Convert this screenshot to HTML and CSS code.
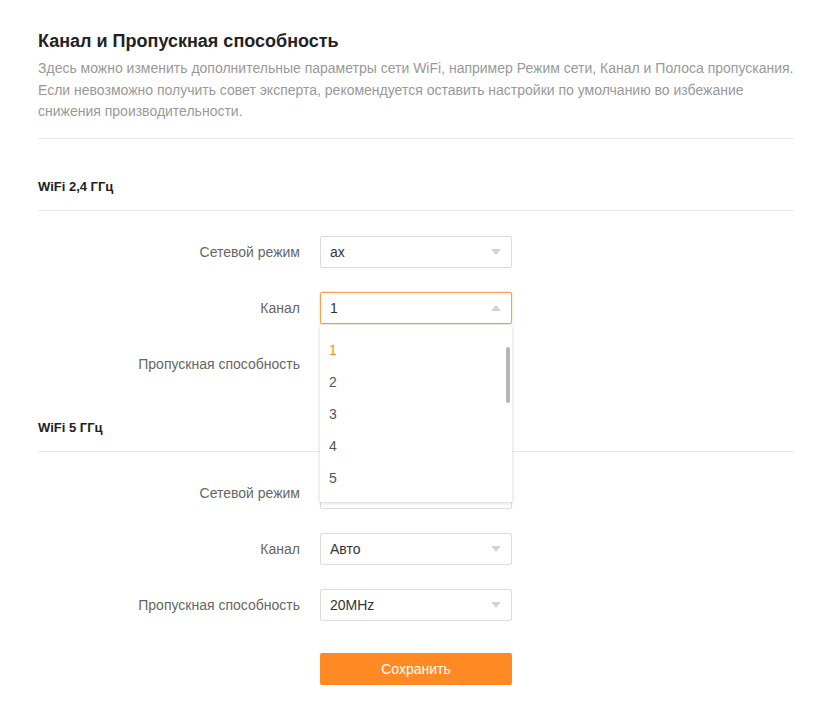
FILE: index.html
```html
<!DOCTYPE html>
<html lang="ru">
<head>
  <meta charset="UTF-8" />
  <title>Канал и Пропускная способность</title>
  <link rel="stylesheet" href="styles.css">
</head>
<body>
  <div class="page">
    <!-- Page header -->
    <div class="page-head">
      <h1>Канал и Пропускная способность</h1>
      <p class="desc">Здесь можно изменить дополнительные параметры сети WiFi, например Режим сети, Канал и Полоса пропускания.<br>Если невозможно получить совет эксперта, рекомендуется оставить настройки по умолчанию во избежание<br>снижения производительности.</p>
    </div>

    <!-- 2.4 GHz -->
    <div class="section">
      <h2>WiFi 2,4 ГГц</h2>
      <div class="form-row">
        <label>Сетевой режим</label>
        <div class="select"><span>ax</span><i class="arrow"></i></div>
      </div>
      <div class="form-row">
        <label>Канал</label>
        <div class="select open"><span>1</span><i class="arrow up"></i>
          <div class="dropdown">
            <ul>
              <li class="selected">1</li>
              <li>2</li>
              <li>3</li>
              <li>4</li>
              <li>5</li>
            </ul>
            <div class="scroll-thumb"></div>
          </div>
        </div>
      </div>
      <div class="form-row">
        <label>Пропускная способность</label>
        <div class="select"><span>20MHz</span><i class="arrow"></i></div>
      </div>
    </div>

    <!-- 5 GHz -->
    <div class="section">
      <h2>WiFi 5 ГГц</h2>
      <div class="form-row">
        <label>Сетевой режим</label>
        <div class="select"><span>ax</span><i class="arrow"></i></div>
      </div>
      <div class="form-row">
        <label>Канал</label>
        <div class="select"><span>Авто</span><i class="arrow"></i></div>
      </div>
      <div class="form-row">
        <label>Пропускная способность</label>
        <div class="select"><span>20MHz</span><i class="arrow"></i></div>
      </div>
    </div>

    <div class="form-row actions">
      <label></label>
      <button type="button" class="btn-save">Сохранить</button>
    </div>
  </div>
</body>
</html>
```

FILE: styles.css
```css
/* Base */
body {
  margin: 0;
  background: #fff;
  font-family: "Liberation Sans", Arial, sans-serif;
  color: #333;
}
.page {
  padding: 29px 37px 20px 38px;
}
/* Header */
.page-head {
  border-bottom: 1px solid #e8e8e8;
  padding-bottom: 15px;
}
.page-head h1 {
  margin: 0;
  font-size: 18px;
  line-height: 24px;
  color: #222;
}
.desc {
  margin: 5px 0 0;
  font-size: 14px;
  line-height: 21.5px;
  color: #999;
  white-space: nowrap;
}
/* Sections */
.section h2 {
  margin: 0 0 25px;
  padding: 38px 0 13px;
  font-size: 13px;
  line-height: 20px;
  color: #222;
  border-bottom: 1px solid #e8e8e8;
}
.form-row {
  display: flex;
  align-items: center;
  margin-bottom: 24px;
}
.section .form-row:last-child {
  margin-bottom: 0;
}
.form-row label {
  width: 262px;
  padding-right: 20px;
  text-align: right;
  font-size: 14px;
  color: #666;
}
/* Select box */
.select {
  position: relative;
  box-sizing: border-box;
  width: 192px;
  height: 32px;
  border: 1px solid #dcdcdc;
  border-radius: 2px;
  background: #fff;
  display: flex;
  align-items: center;
  padding: 0 10px 0 9px;
  font-size: 14px;
  color: #333;
}
.select span {
  flex: 1;
}
.select.open {
  border-color: #ff9b4d;
  box-shadow: 0 0 2px rgba(255, 138, 36, 0.6);
}
.arrow {
  width: 0;
  height: 0;
  border-left: 5.5px solid transparent;
  border-right: 5.5px solid transparent;
  border-top: 6px solid #d4d4d4;
}
.arrow.up {
  border-top: none;
  border-bottom: 6px solid #d4d4d4;
}
/* Dropdown list */
.dropdown {
  position: absolute;
  top: 32px;
  left: -1px;
  width: 192px;
  height: 177px;
  background: #fff;
  box-shadow: 0 1px 4px rgba(0, 0, 0, 0.18);
  overflow: hidden;
  z-index: 10;
}
.dropdown ul {
  list-style: none;
  margin: 0;
  padding: 9px 0 0;
}
.dropdown li {
  height: 32px;
  line-height: 32px;
  padding-left: 9px;
  font-size: 14px;
  color: #555;
}
.dropdown li.selected {
  color: #ff8a24;
}
.scroll-thumb {
  position: absolute;
  right: 2px;
  top: 22px;
  width: 4px;
  height: 56px;
  border-radius: 2px;
  background: #b5b5b5;
}
/* Save button */
.actions {
  margin-top: 32px;
}
.btn-save {
  width: 192px;
  height: 32px;
  border: none;
  border-radius: 2px;
  background: #ff8a24;
  color: #fff;
  font-family: inherit;
  font-size: 14px;
  cursor: pointer;
}
```
